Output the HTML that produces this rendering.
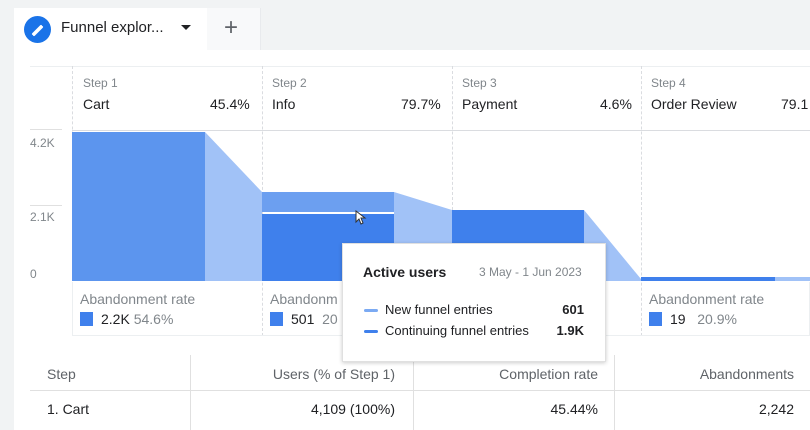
<!DOCTYPE html>
<html><head><meta charset="utf-8"><style>
*{margin:0;padding:0;box-sizing:border-box}
body{width:810px;height:430px;overflow:hidden;background:#f1f3f4;font-family:"Liberation Sans",sans-serif;position:relative;color:#202124}
.a{position:absolute}
.main{left:14px;top:50px;width:796px;height:380px;background:#fff}
.g{color:#80868b}
.vd{border-left:1px dashed #dadce0;width:0}
</style></head><body>
<div class="a" style="left:14px;top:8px;width:193px;height:43px;background:#fff"></div>
<div class="a" style="left:207px;top:8px;width:54px;height:42px;background:#f8f9fa;border-right:1px solid #e8eaed"></div>
<div class="a" style="left:24px;top:16px;width:27px;height:27px;border-radius:50%;background:#1a73e8"></div>
<svg class="a" style="left:24px;top:16px" width="27" height="27"><path d="M9 18 L17 10 M10 19 L18 11" stroke="#fff" stroke-width="2.2" stroke-linecap="round"/></svg>
<div class="a" style="left:61px;top:19px;font-size:15px">Funnel explor...</div>
<div class="a" style="left:181px;top:25px;width:0;height:0;border-left:5px solid transparent;border-right:5px solid transparent;border-top:5px solid #202124"></div>
<div class="a" style="left:224px;top:16px;font-size:24px;color:#5f6368;line-height:24px">+</div>
<div class="a main"></div>
<div class="a" style="left:30px;top:66px;width:780px;border-top:1px solid #eceff1"></div>
<div class="a" style="left:72px;top:130px;width:738px;border-top:1px solid #dadce0"></div>
<div class="a vd" style="left:72px;top:66px;height:270px"></div>
<div class="a vd" style="left:262px;top:66px;height:270px"></div>
<div class="a vd" style="left:452px;top:66px;height:270px"></div>
<div class="a vd" style="left:641px;top:66px;height:270px"></div>
<div class="a g" style="left:83px;top:76px;font-size:12px">Step 1</div>
<div class="a" style="left:83px;top:96px;font-size:14px">Cart</div>
<div class="a" style="left:210px;top:96px;font-size:14px">45.4%</div>
<div class="a g" style="left:272px;top:76px;font-size:12px">Step 2</div>
<div class="a" style="left:272px;top:96px;font-size:14px">Info</div>
<div class="a" style="left:401px;top:96px;font-size:14px">79.7%</div>
<div class="a g" style="left:462px;top:76px;font-size:12px">Step 3</div>
<div class="a" style="left:462px;top:96px;font-size:14px">Payment</div>
<div class="a" style="left:600px;top:96px;font-size:14px">4.6%</div>
<div class="a g" style="left:651px;top:76px;font-size:12px">Step 4</div>
<div class="a" style="left:651px;top:96px;font-size:14px">Order Review</div>
<div class="a" style="left:781px;top:96px;font-size:14px">79.1</div>
<div class="a" style="left:30px;top:129px;width:32px;border-top:1px solid #e0e0e0"></div>
<div class="a" style="left:30px;top:205px;width:32px;border-top:1px solid #e0e0e0"></div>
<div class="a g" style="left:30px;top:136px;font-size:12px">4.2K</div>
<div class="a g" style="left:30px;top:210px;font-size:12px">2.1K</div>
<div class="a g" style="left:30px;top:267px;font-size:12px">0</div>
<svg class="a" style="left:0;top:0" width="810" height="300">
<rect x="72" y="132" width="133" height="149" fill="#5c95ee"/>
<polygon points="205,132 262,192 262,281 205,281" fill="#a1c2f7"/>
<rect x="262" y="192" width="132" height="20" fill="#6c9ff0"/>
<rect x="262" y="214" width="132" height="67" fill="#3f80ec"/>
<polygon points="394,192 452,210 452,281 394,281" fill="#a1c2f7"/>
<rect x="452" y="210" width="132" height="71" fill="#3f80ec"/>
<polygon points="584,210 641,279 641,281 584,281" fill="#a1c2f7"/>
<rect x="641" y="277" width="134" height="4" fill="#3f80ec"/>
<rect x="775" y="277" width="35" height="4" fill="#a1c2f7"/>
</svg>
<div class="a" style="left:72px;top:282px;width:738px;height:54px;border:1px solid #eceff1;border-top:none"></div>
<div class="a g" style="left:80px;top:291px;font-size:14px">Abandonment rate</div>
<div class="a" style="left:80px;top:312px;width:13px;height:14px;background:#3f80ec"></div>
<div class="a" style="left:101px;top:311px;font-size:14px">2.2K <span class="g">54.6%</span></div>
<div class="a g" style="left:270px;top:291px;font-size:14px">Abandonm</div>
<div class="a" style="left:270px;top:312px;width:13px;height:14px;background:#3f80ec"></div>
<div class="a" style="left:291px;top:311px;font-size:14px">501 <span class="g">&nbsp;20</span></div>
<div class="a g" style="left:649px;top:291px;font-size:14px">Abandonment rate</div>
<div class="a" style="left:649px;top:312px;width:13px;height:14px;background:#3f80ec"></div>
<div class="a" style="left:670px;top:311px;font-size:14px">19 &nbsp;&nbsp;<span class="g">20.9%</span></div>
<div class="a" style="left:30px;top:390px;width:780px;border-top:1px solid #e0e0e0"></div>
<div class="a" style="left:190px;top:355px;height:75px;border-left:1px solid #e0e0e0"></div>
<div class="a" style="left:413px;top:355px;height:75px;border-left:1px solid #e0e0e0"></div>
<div class="a" style="left:614px;top:355px;height:75px;border-left:1px solid #e0e0e0"></div>
<div class="a" style="left:47px;top:366px;font-size:14px;color:#5f6368">Step</div>
<div class="a" style="left:190px;top:366px;width:205px;text-align:right;font-size:14px;color:#5f6368">Users (% of Step 1)</div>
<div class="a" style="left:413px;top:366px;width:185px;text-align:right;font-size:14px;color:#5f6368">Completion rate</div>
<div class="a" style="left:614px;top:366px;width:180px;text-align:right;font-size:14px;color:#5f6368">Abandonments</div>
<div class="a" style="left:47px;top:401px;font-size:14px">1. Cart</div>
<div class="a" style="left:190px;top:401px;width:205px;text-align:right;font-size:14px">4,109 (100%)</div>
<div class="a" style="left:413px;top:401px;width:185px;text-align:right;font-size:14px">45.44%</div>
<div class="a" style="left:614px;top:401px;width:180px;text-align:right;font-size:14px">2,242</div>
<div class="a" style="left:342px;top:243px;width:264px;height:119px;background:#fff;border:1px solid #e0e0e0;box-shadow:0 1px 4px rgba(0,0,0,.2)"></div>
<div class="a" style="left:363px;top:264px;font-size:14px;font-weight:bold">Active users</div>
<div class="a g" style="left:479px;top:265px;font-size:12px">3 May - 1 Jun 2023</div>
<div class="a" style="left:364px;top:309px;width:14px;height:3px;background:#7baaf3;border-radius:2px"></div>
<div class="a" style="left:385px;top:302px;font-size:13px">New funnel entries</div>
<div class="a" style="left:540px;top:302px;width:44px;text-align:right;font-size:13px;font-weight:bold">601</div>
<div class="a" style="left:364px;top:330px;width:14px;height:3px;background:#3f80ec;border-radius:2px"></div>
<div class="a" style="left:385px;top:323px;font-size:13px">Continuing funnel entries</div>
<div class="a" style="left:540px;top:323px;width:44px;text-align:right;font-size:13px;font-weight:bold">1.9K</div>
<svg class="a" style="left:355px;top:210px" width="12" height="16"><path d="M1 1 L1 12 L4 9 L6 14 L8 13 L6 8 L10 8 Z" fill="#fff" stroke="#333" stroke-width="1"/></svg>
</body></html>
